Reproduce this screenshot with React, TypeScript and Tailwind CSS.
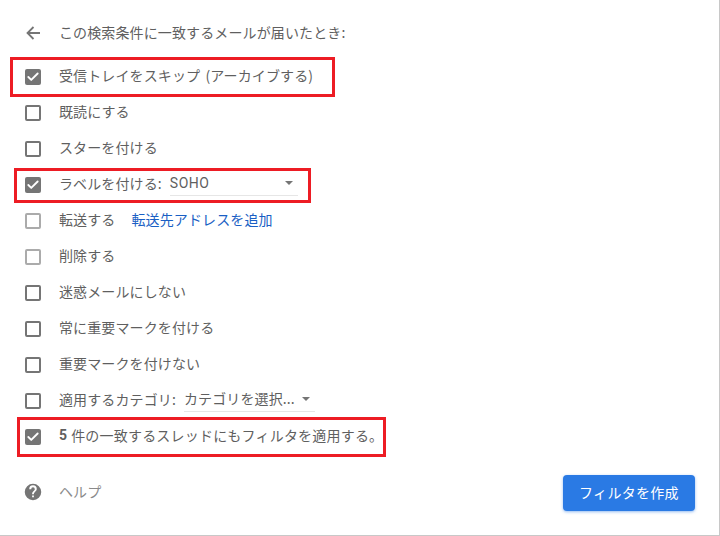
import React from 'react';
import { Check } from 'lucide-react';

interface RowProps {
  checked?: boolean;
  muted?: boolean;
  children: React.ReactNode;
}

const Row: React.FC<RowProps> = ({ checked = false, muted = false, children }) => (
  <div className="flex h-9 items-center pl-[25px]">
    {checked ? (
      <div className="flex h-4 w-4 items-center justify-center rounded-[2px] bg-[#757575]">
        <Check className="h-[14px] w-[14px] text-white" strokeWidth={3.2} />
      </div>
    ) : (
      <div className={`h-4 w-4 rounded-[2px] border-2 ${muted ? 'border-[#ababab]' : 'border-[#757575]'}`} />
    )}
    <div className="ml-[18px] flex items-center whitespace-nowrap pb-[4px]">{children}</div>
  </div>
);

const Caret = () => <div className="h-0 w-0 border-x-[4px] border-t-[4px] border-x-transparent border-t-[#757575]" />;

export default function App() {
  return (
    <div
      className="relative h-[536px] w-[720px] overflow-hidden border-r border-b border-[#c8c8c8] bg-white text-[14px] tracking-[0.12px] text-[#5f5f5f]"
      style={{ fontFamily: '"Noto Sans CJK JP", Roboto, sans-serif' }}
    >
      {/* Header */}
      <div className="flex h-[59px] items-center pl-[26px] pt-[7px]">
        <svg className="h-[14px] w-[14px]" viewBox="0 0 14 14" fill="none" stroke="#757575" strokeWidth="1.8">
          <path d="M14 7H1.5M7.5 1 1.5 7l6 6" />
        </svg>
        <span className="ml-[19px] whitespace-nowrap pb-[2px]">この検索条件に一致するメールが届いたとき:</span>
      </div>

      {/* Actions */}
      <Row checked>
        <span className="[word-spacing:2px]">受信トレイをスキップ (アーカイブする)</span>
      </Row>
      <Row>既読にする</Row>
      <Row>スターを付ける</Row>
      <Row checked>
        <span>ラベルを付ける:</span>
        <div className="ml-[8px] flex h-[25px] w-[128px] items-center justify-between border-b border-[#e6e6e6] pr-[5px]">
          <span className="pt-[1px] text-[14px] tracking-[0.5px]" style={{ fontFamily: 'Roboto, sans-serif' }}>SOHO</span>
          <Caret />
        </div>
      </Row>
      <Row muted>
        <span>転送する</span>
        <span className="ml-[16px] text-[#1a5fc4]">転送先アドレスを追加</span>
      </Row>
      <Row muted>削除する</Row>
      <Row>迷惑メールにしない</Row>
      <Row>常に重要マークを付ける</Row>
      <Row>重要マークを付けない</Row>
      <Row>
        <span>適用するカテゴリ:</span>
        <div className="ml-[8px] flex h-[25px] w-[131px] items-center justify-between border-b border-[#e6e6e6] pr-[5px]">
          <span>カテゴリを選択...</span>
          <Caret />
        </div>
      </Row>
      <Row checked>
        <b className="mr-[4px] font-bold" style={{ fontFamily: 'Roboto, sans-serif' }}>5</b>
        <span className="tracking-[0.2px]">件の一致するスレッドにもフィルタを適用する。</span>
      </Row>

      {/* Footer */}
      <div className="mt-[20px] flex items-center justify-between pl-[24px] pr-[24px]">
        <div className="flex items-center pb-[2px]">
          <svg className="h-[18px] w-[18px]" viewBox="0 0 24 24" fill="#757575">
            <path d="M12 1a11 11 0 1 0 0 22 11 11 0 0 0 0-22Zm1.2 18h-2.4v-2.4h2.4V19Zm2.5-8.2-1.1 1.1c-.9.9-1.4 1.6-1.4 3.1h-2.4v-.6c0-1.2.5-2.3 1.4-3.1l1.5-1.5c.4-.4.7-1 .7-1.6a2.4 2.4 0 0 0-4.8 0H7A4.9 4.9 0 0 1 17 8c0 1.1-.5 2.1-1.3 2.8Z" />
          </svg>
          <span className="ml-[17px] pb-[2px] text-[#8a8a8a]">ヘルプ</span>
        </div>
        <div className="flex h-9 w-[132px] items-center justify-center rounded-[4px] bg-[#2a7ae4] pb-[2px] tracking-[0.3px] text-white shadow-[0_1px_3px_rgba(42,122,228,0.5)]">
          フィルタを作成
        </div>
      </div>

      {/* Red annotation boxes */}
      <div className="absolute left-[10px] top-[57px] h-[40px] w-[325px] border-[3px] border-[#ed1c24]" />
      <div className="absolute left-[14px] top-[168px] h-[35px] w-[297px] border-[3px] border-[#ed1c24]" />
      <div className="absolute left-[17px] top-[417px] h-[40px] w-[369px] border-[3px] border-[#ed1c24]" />
    </div>
  );
}
